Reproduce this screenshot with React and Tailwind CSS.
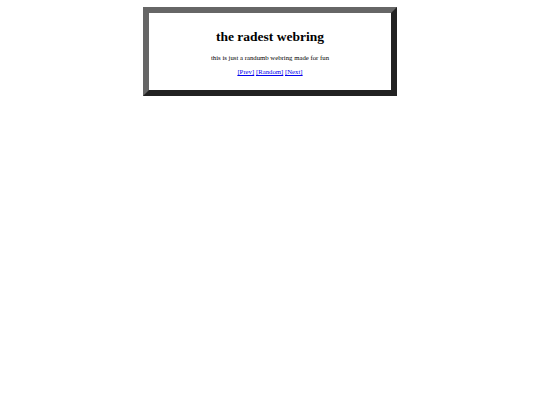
import React from 'react';

const App = () => {
    return (
        <div className="min-h-[405px] bg-white pt-[7px]" style={{ fontFamily: '"Liberation Serif", "Times New Roman", serif' }}>
            <div className="mx-auto w-[254px] border-[6px] border-t-[#666666] border-l-[#666666] border-b-[#222222] border-r-[#222222] bg-white text-center text-black pt-[16px] pb-[14px]">
                <h1 className="text-[13.5px] font-bold leading-[16px]">the radest webring</h1>
                <p className="mt-[9px] text-[6.75px] leading-[8px]">this is just a randumb webring made for fun</p>
                <p className="mt-[6px] text-[6.75px] leading-[8px]">
                    <a href="#" className="text-[#0000ee] underline">[Prev]</a>{' '}
                    <a href="#" className="text-[#0000ee] underline">[Random]</a>{' '}
                    <a href="#" className="text-[#0000ee] underline">[Next]</a>
                </p>
            </div>
        </div>
    );
};

export default App;
